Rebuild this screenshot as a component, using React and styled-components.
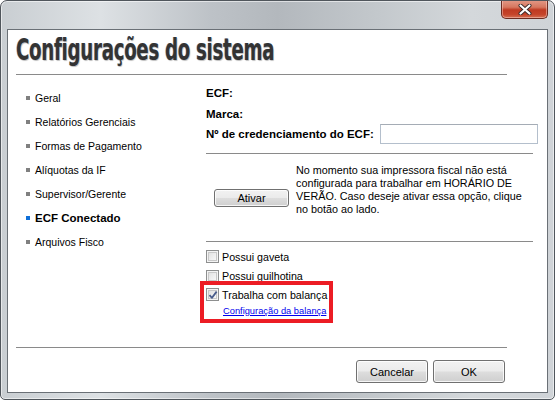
import React from "react";
import styled, { createGlobalStyle } from "styled-components";

const Global = createGlobalStyle`
  html, body { margin: 0; padding: 0; background: #ffffff; }
  body { font-family: "Liberation Sans", Arial, sans-serif; }
  * { box-sizing: border-box; }
`;

const Frame = styled.div`
  width: 555px;
  height: 400px;
  border: 1px solid #50565c;
  border-radius: 7px 7px 5px 5px;
  background: linear-gradient(90deg, #c9ced2 0%, #dde1e4 18%, #bdc2c7 38%, #b3b8bd 50%, #c3c8cc 68%, #d4d8db 85%, #cfd3d7 100%);
  box-shadow: inset 0 0 0 1px rgba(255, 255, 255, 0.55);
  padding: 0 6px 6px 6px;
  display: flex;
  flex-direction: column;
  overflow: hidden;
`;

const TitleBar = styled.div`
  height: 28px;
  display: flex;
  justify-content: flex-end;
  align-items: flex-start;
`;

const CloseButton = styled.div`
  width: 47px;
  height: 19px;
  margin-top: -1px;
  border: 1px solid #6b2c22;
  border-top: none;
  border-radius: 0 0 5px 5px;
  background: linear-gradient(180deg, #e39a88 0%, #d6775f 40%, #bf3a22 55%, #c5442a 80%, #d46f53 100%);
  box-shadow: inset 0 0 0 1px rgba(255, 220, 210, 0.45);
  display: flex;
  align-items: center;
  justify-content: center;
`;

const Client = styled.div`
  height: 364px;
  border: 1px solid #6a7076;
  background: #ffffff;
  display: flex;
  flex-direction: column;
`;

const Header = styled.div`
  padding: 4px 0 0 8px;
  height: 44px;
  overflow: hidden;
`;

const Title = styled.h1`
  margin: 0;
  display: inline-block;
  font-family: "DejaVu Sans Condensed", "DejaVu Sans", sans-serif;
  font-weight: bold;
  font-size: 31px;
  line-height: 31px;
  color: #333333;
  letter-spacing: -0.5px;
  transform: scaleX(0.655);
  transform-origin: left center;
  white-space: nowrap;
  text-shadow: -1px 0 0 rgba(80, 140, 230, 0.35), 1px 1px 1px rgba(0, 0, 0, 0.25);
`;

const Rule = styled.hr`
  margin: ${(p) => p.$margin || "0"};
  border: none;
  border-top: 1px solid #8a8a8a;
  height: 0;
`;

const Body = styled.div`
  flex: 1;
  display: flex;
`;

const Nav = styled.ul`
  width: 198px;
  margin: 0;
  padding: 11px 0 0 18px;
  list-style: none;
`;

const NavItem = styled.li`
  height: 24px;
  display: flex;
  align-items: center;
  gap: 5px;
  font-size: ${(p) => (p.$active ? "11.5px" : "10.5px")};
  font-weight: ${(p) => (p.$active ? "bold" : "normal")};
  color: #000;
  &::before {
    content: "";
    width: 4px;
    height: 4px;
    background: ${(p) => (p.$active ? "#0f6fd8" : "#808080")};
    flex: none;
  }
`;

const Panel = styled.div`
  width: 331px;
  padding-top: 7px;
  display: flex;
  flex-direction: column;
`;

const InfoRow = styled.div`
  height: ${(p) => p.$h || 21}px;
  display: flex;
  align-items: center;
  gap: 6px;
  font-size: 11.5px;
  font-weight: bold;
  color: #000;
  white-space: nowrap;
`;

const TextBox = styled.input`
  width: 158px;
  height: 20px;
  flex: none;
  border: 1px solid #b4bfcc;
  border-top-color: #a5acb5;
  background: #fff;
  outline: none;
  padding: 0 3px;
`;

const ActivateSection = styled.div`
  height: 87px;
  display: flex;
  align-items: flex-start;
  padding: 10px 0 0 8px;
  gap: 7px;
`;

const Button = styled.button`
  width: ${(p) => p.$w || 72}px;
  height: ${(p) => p.$h || 23}px;
  margin-top: ${(p) => p.$mt || 0}px;
  flex: none;
  border: 1px solid #707070;
  border-radius: 3px;
  background: linear-gradient(180deg, #f2f2f2 0%, #ebebeb 48%, #dddddd 52%, #cfcfcf 100%);
  box-shadow: inset 0 0 0 1px rgba(255, 255, 255, 0.8);
  font-family: "Liberation Sans", Arial, sans-serif;
  font-size: 11px;
  color: #000;
  padding: 0;
  display: flex;
  align-items: center;
  justify-content: center;
`;

const Notice = styled.p`
  margin: 0;
  width: 230px;
  font-size: 10.8px;
  line-height: 13px;
  color: #000;
`;

const Options = styled.div`
  padding-top: 5px;
  display: flex;
  flex-direction: column;
`;

const CheckRow = styled.label`
  height: 19.5px;
  display: flex;
  align-items: center;
  gap: 3px;
  font-size: 10.7px;
  color: #000;
`;

const Box = styled.span`
  width: 13px;
  height: 13px;
  flex: none;
  border: 1px solid #8e8f8f;
  background: linear-gradient(135deg, #dcdcdc 0%, #f0f0f0 60%, #fbfbfb 100%);
  box-shadow: inset 0 0 0 1px #f4f4f4, inset 0 0 0 2px #c8c8c8;
  display: flex;
  align-items: center;
  justify-content: center;
`;

const Highlight = styled.div`
  width: 133px;
  margin: -5px 0 0 -6px;
  border: 4px solid #ec1c24;
  padding: 0 0 0 2px;
  display: flex;
  flex-direction: column;
`;

const Link = styled.a`
  margin: 0 0 1px 17px;
  font-family: "Liberation Sans", Arial, sans-serif;
  font-size: 9.3px;
  line-height: 13px;
  color: #0000ee;
  text-decoration: underline;
  cursor: pointer;
`;

const Footer = styled.div`
  display: flex;
  flex-direction: column;
`;

const ButtonBar = styled.div`
  display: flex;
  justify-content: flex-end;
  gap: 5px;
  padding: 12px 42px 9px 0;
`;

const Check = () => (
  <svg width="10" height="10" viewBox="0 0 10 10">
    <path d="M1.5 5.2 L4 7.8 L8.6 1.6" fill="none" stroke="#4a5d8c" strokeWidth="1.8" strokeLinejoin="round" />
  </svg>
);

const CloseGlyph = () => (
  <svg width="14" height="11" viewBox="0 0 14 11">
    <path d="M2.5 1.5 L11.5 9.5 M11.5 1.5 L2.5 9.5" stroke="#3b2a2a" strokeWidth="4" strokeLinecap="round" />
    <path d="M2.5 1.5 L11.5 9.5 M11.5 1.5 L2.5 9.5" stroke="#ffffff" strokeWidth="2.2" strokeLinecap="round" />
  </svg>
);

const navItems = [
  "Geral",
  "Relatórios Gerenciais",
  "Formas de Pagamento",
  "Alíquotas da IF",
  "Supervisor/Gerente",
  "ECF Conectado",
  "Arquivos Fisco",
];

export default function App() {
  return (
    <>
      <Global />
      <Frame>
        <TitleBar>
          <CloseButton>
            <CloseGlyph />
          </CloseButton>
        </TitleBar>
        <Client>
          <Header>
            <Title>Configurações do sistema</Title>
          </Header>
          <Rule $margin="0 40px 0 8px" />
          <Body>
            <Nav>
              {navItems.map((n) => (
                <NavItem key={n} $active={n === "ECF Conectado"}>
                  {n}
                </NavItem>
              ))}
            </Nav>
            <Panel>
              <InfoRow>ECF:</InfoRow>
              <InfoRow>Marca:</InfoRow>
              <InfoRow $h={20}>
                Nº de credenciamento do ECF:
                <TextBox />
              </InfoRow>
              <Rule $margin="9px 4px 0 0" />
              <ActivateSection>
                <Button $w={75} $h={18} $mt={25}>Ativar</Button>
                <Notice>
                  No momento sua impressora fiscal não está configurada para trabalhar em HORÁRIO DE
                  VERÃO. Caso deseje ativar essa opção, clique no botão ao lado.
                </Notice>
              </ActivateSection>
              <Rule $margin="0 4px 0 0" />
              <Options>
                <CheckRow>
                  <Box />
                  Possui gaveta
                </CheckRow>
                <CheckRow>
                  <Box />
                  Possui guilhotina
                </CheckRow>
                <Highlight>
                  <CheckRow>
                    <Box>
                      <Check />
                    </Box>
                    Trabalha com balança
                  </CheckRow>
                  <Link>Configuração da balança</Link>
                </Highlight>
              </Options>
            </Panel>
          </Body>
          <Footer>
            <Rule $margin="0 40px 0 8px" />
            <ButtonBar>
              <Button>Cancelar</Button>
              <Button>OK</Button>
            </ButtonBar>
          </Footer>
        </Client>
      </Frame>
    </>
  );
}
